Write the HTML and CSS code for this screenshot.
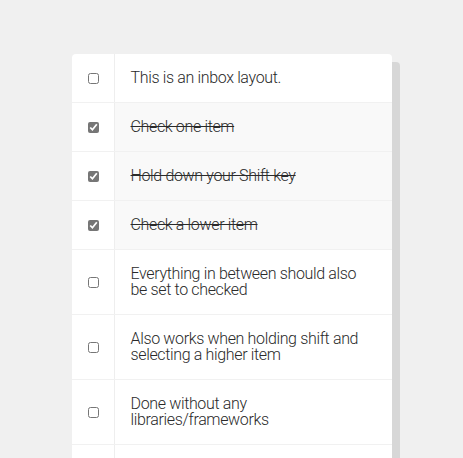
FILE: index.html
```html
<!DOCTYPE html>
<html>
<head>
<meta charset="utf-8">
<link rel="stylesheet" href="styles.css">
</head>
<body>
<div class="inbox">
  <div class="item"><input type="checkbox"><p>This is an inbox layout.</p></div>
  <div class="item"><input type="checkbox" checked><p>Check one item</p></div>
  <div class="item"><input type="checkbox" checked><p>Hold down your Shift key</p></div>
  <div class="item"><input type="checkbox" checked><p>Check a lower item</p></div>
  <div class="item"><input type="checkbox"><p>Everything in between should also be set to checked</p></div>
  <div class="item"><input type="checkbox"><p>Also works when holding shift and selecting a higher item</p></div>
  <div class="item"><input type="checkbox"><p>Done without any libraries/frameworks</p></div>
  <div class="item"><input type="checkbox"><p>Good Luck!</p></div>
</div>
</body>
</html>
```

FILE: styles.css
```css
html {
  background: #f0f0f0;
  overflow: hidden;
}
body {
  margin: 0;
  padding-top: 54px;
  font-family: Roboto, "Liberation Sans", sans-serif;
}
.inbox {
  width: 320px;
  margin: 0 auto;
  background: #fff;
  border-radius: 4px;
  box-shadow: 8px 8px 0 rgba(0, 0, 0, 0.1);
}
.item {
  display: flex;
  align-items: stretch;
  border-bottom: 1px solid #f1f1f1;
}
.item:last-child {
  border-bottom: 0;
}
.item input {
  flex: 0 0 auto;
  width: 11px;
  height: 11px;
  margin: auto 15px auto 16px;
  accent-color: #767676;
}
.item p {
  flex: 1;
  margin: 0;
  padding: 16px;
  font-size: 16px;
  line-height: 16px;
  font-weight: 300;
  letter-spacing: -0.35px;
  color: #2a2a2a;
  border-left: 1px solid #eeeeee;
}
.item input:checked + p {
  background: #f9f9f9;
  text-decoration: line-through;
}
```
